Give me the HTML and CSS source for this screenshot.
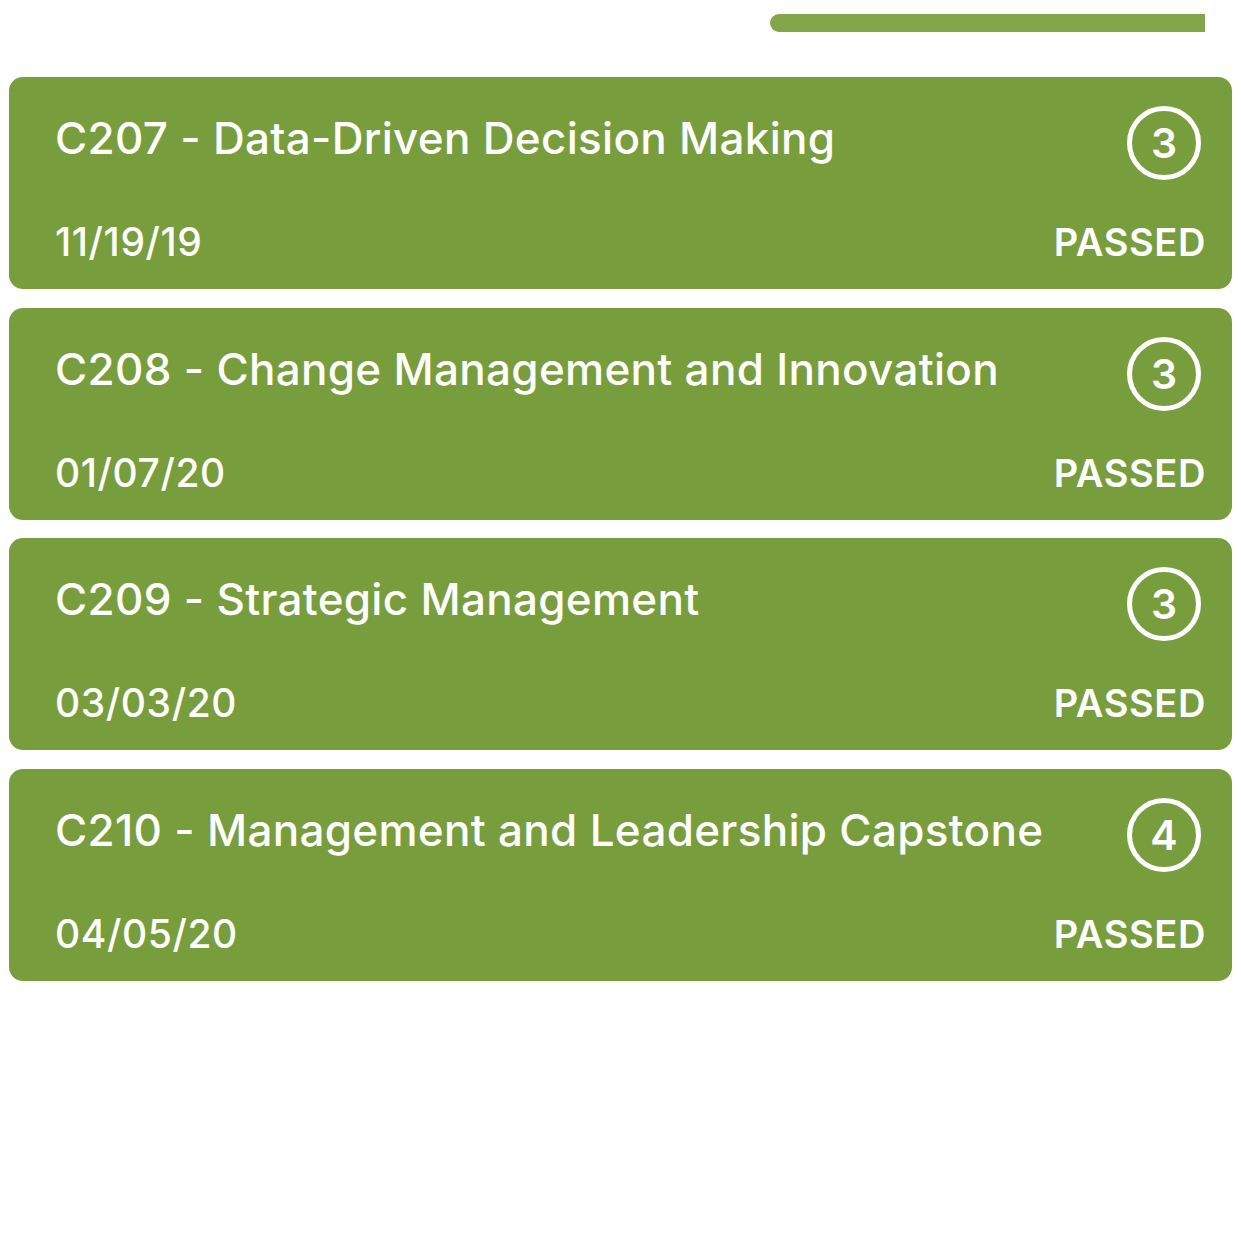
FILE: index.html
```html
<html>
<head>
  <title>Courses</title>
  <link rel="stylesheet" href="styles.css">
</head>
<body>
  <div class="top">
    <div class="progress"></div>
  </div>

  <div class="list">
    <div class="course">
      <div class="row">
        <div class="name">C207 - Data-Driven Decision Making</div>
        <div class="units">3</div>
      </div>
      <div class="row bottom">
        <div class="date">11/19/19</div>
        <div class="status">PASSED</div>
      </div>
    </div>

    <div class="course">
      <div class="row">
        <div class="name">C208 - Change Management and Innovation</div>
        <div class="units">3</div>
      </div>
      <div class="row bottom">
        <div class="date">01/07/20</div>
        <div class="status">PASSED</div>
      </div>
    </div>

    <div class="course">
      <div class="row">
        <div class="name">C209 - Strategic Management</div>
        <div class="units">3</div>
      </div>
      <div class="row bottom">
        <div class="date">03/03/20</div>
        <div class="status">PASSED</div>
      </div>
    </div>

    <div class="course">
      <div class="row">
        <div class="name">C210 - Management and Leadership Capstone</div>
        <div class="units">4</div>
      </div>
      <div class="row bottom">
        <div class="date">04/05/20</div>
        <div class="status">PASSED</div>
      </div>
    </div>
  </div>
</body>
</html>
```

FILE: styles.css
```css
body {
  margin: 0;
  background: #ffffff;
  font-family: Inter, "Noto Sans", sans-serif;
  color: #ffffff;
}

.top {
  height: 77px;
  display: flex;
  justify-content: flex-end;
  padding-right: 36px;
  box-sizing: border-box;
}

.progress {
  margin-top: 14px;
  width: 435px;
  height: 18px;
  background: #84a64a;
  border-radius: 9px 0 0 9px;
}

.list {
  display: flex;
  flex-direction: column;
  gap: 18.6px;
  padding: 0 9px;
}

.course {
  height: 212px;
  background: #789d3c;
  border-radius: 14px;
  padding: 35px 26px 0 46px;
  box-sizing: border-box;
  display: flex;
  flex-direction: column;
}

.row {
  display: flex;
  justify-content: space-between;
  align-items: flex-start;
}

.name {
  font-size: 44px;
  font-weight: 500;
  line-height: 52px;
  letter-spacing: 0.3px;
}

.units {
  width: 64px;
  height: 64px;
  border: 5px solid #ffffff;
  border-radius: 50%;
  display: flex;
  align-items: center;
  justify-content: center;
  font-size: 41px;
  font-weight: 600;
  margin-top: -6px;
  margin-right: 5px;
}

.bottom {
  margin-top: auto;
  padding-bottom: 25px;
  align-items: flex-end;
}

.date {
  font-size: 39px;
  font-weight: 500;
  line-height: 44px;
  letter-spacing: 0.6px;
}

.status {
  font-size: 38px;
  font-weight: 600;
  line-height: 44px;
  letter-spacing: 0.6px;
}
```
